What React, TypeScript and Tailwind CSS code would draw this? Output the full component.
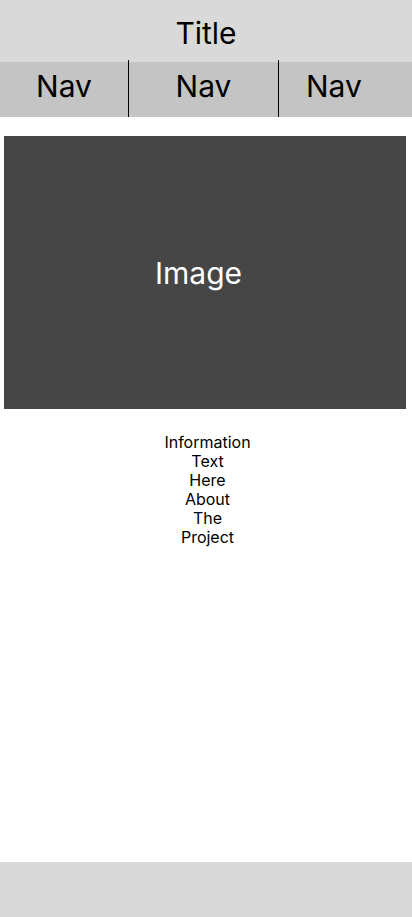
export default function App() {
  const font = { fontFamily: "Inter, 'Noto Sans', sans-serif" };
  return (
    <div className="w-[412px] h-[917px] flex flex-col bg-white text-black" style={font}>
      <div className="h-[60px] bg-[#d9d9d9] flex items-center justify-center">
        <span className="text-[30px] leading-none pt-[5px]">Title</span>
      </div>
      <div className="h-[57px] flex">
        <div className="w-[128px] bg-[#c4c4c4] border-t-2 border-[#d9d9d9] flex items-center justify-center pb-[7px]">
          <span className="text-[30px] leading-none">Nav</span>
        </div>
        <div className="w-px bg-black" />
        <div className="w-[149px] bg-[#c4c4c4] border-t-2 border-[#d9d9d9] flex items-center justify-center pb-[7px]">
          <span className="text-[30px] leading-none">Nav</span>
        </div>
        <div className="w-px bg-black" />
        <div className="flex-1 bg-[#c4c4c4] border-t-2 border-[#d9d9d9] flex items-center pl-[27px] pb-[7px]">
          <span className="text-[30px] leading-none">Nav</span>
        </div>
      </div>
      <div className="pt-[19px] px-[4px] pr-[6px]">
        <div className="h-[273px] bg-[#464646] flex items-center justify-center pr-[13px]">
          <span className="text-[30px] leading-none text-white">Image</span>
        </div>
      </div>
      <div className="pt-[24px] pl-[3px] flex flex-col items-center text-[16px] leading-[19px]">
        <span>Information</span>
        <span>Text</span>
        <span>Here</span>
        <span>About</span>
        <span>The</span>
        <span>Project</span>
      </div>
      <div className="flex-1" />
      <div className="h-[55px] bg-[#d9d9d9]" />
    </div>
  );
}
